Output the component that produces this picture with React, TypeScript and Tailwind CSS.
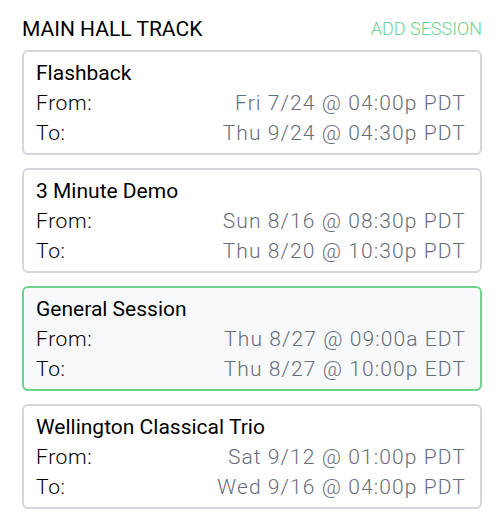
import React from 'react';

type Session = {
  title: string;
  from: string;
  to: string;
  active?: boolean;
};

const SESSIONS: Session[] = [
  { title: 'Flashback', from: 'Fri 7/24 @ 04:00p PDT', to: 'Thu 9/24 @ 04:30p PDT' },
  { title: '3 Minute Demo', from: 'Sun 8/16 @ 08:30p PDT', to: 'Thu 8/20 @ 10:30p PDT' },
  { title: 'General Session', from: 'Thu 8/27 @ 09:00a EDT', to: 'Thu 8/27 @ 10:00p EDT', active: true },
  { title: 'Wellington Classical Trio', from: 'Sat 9/12 @ 01:00p PDT', to: 'Wed 9/16 @ 04:00p PDT' },
];

const SessionCard: React.FC<{ session: Session }> = ({ session }) => (
  <div
    className={`rounded-md border-2 pl-[12px] pr-[14px] pt-[6px] pb-[5px] leading-[30px] text-[21px] ${
      session.active ? 'border-[#6cd38c] bg-[#f7f9fb]' : 'border-[#d4d6db] bg-white'
    }`}
  >
    <div className="text-black">{session.title}</div>
    <div className="flex justify-between">
      <span className="font-light tracking-[0.6px] text-black">From:</span>
      <span className="font-light tracking-[1.1px] text-[#676d7a]">{session.from}</span>
    </div>
    <div className="flex justify-between">
      <span className="font-light tracking-[0.6px] text-black">To:</span>
      <span className="font-light tracking-[1.1px] text-[#676d7a]">{session.to}</span>
    </div>
  </div>
);

export default function App() {
  return (
    <div className="min-h-screen bg-white px-[22px] pt-[15px] font-['Roboto',sans-serif]">
      <div className="mb-[7px] flex h-[28px] items-end justify-between pb-[1px]">
        <h2 className="text-[21px] leading-[26px] text-black">MAIN HALL TRACK</h2>
        <button className="text-[18px] leading-[26px] font-light text-[#68d391]">ADD SESSION</button>
      </div>
      <div className="flex flex-col gap-[13px]">
        {SESSIONS.map((s) => (
          <SessionCard key={s.title} session={s} />
        ))}
      </div>
    </div>
  );
}
